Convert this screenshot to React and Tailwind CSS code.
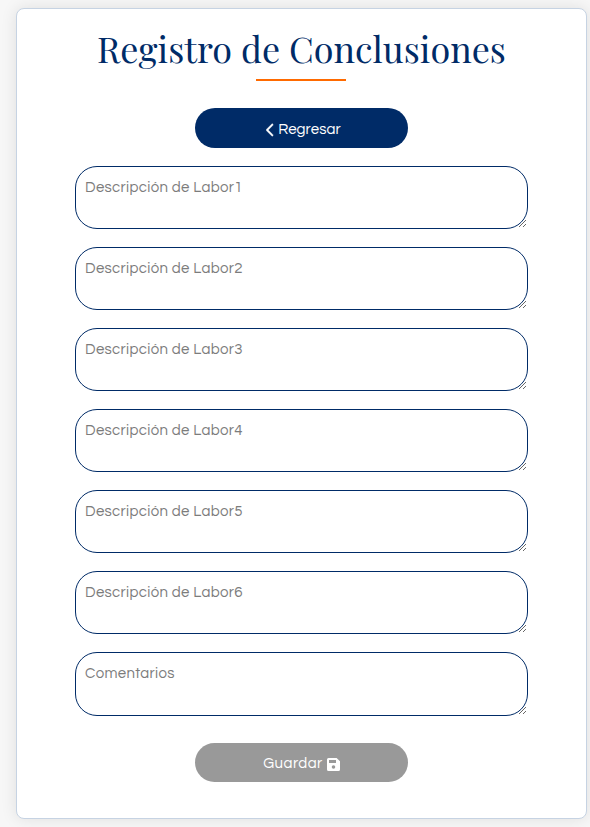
import { FaChevronLeft } from "react-icons/fa6";

const fields = [
  "Descripción de Labor1",
  "Descripción de Labor2",
  "Descripción de Labor3",
  "Descripción de Labor4",
  "Descripción de Labor5",
  "Descripción de Labor6",
];

const fieldClass =
  "block w-[453px] resize rounded-[22px] border border-[#002b67] bg-white px-[9px] pt-[11px] text-[15px] leading-5 tracking-[0.33px] text-gray-700 placeholder:text-[#7c7c7c] outline-none overflow-auto";

function SaveIcon() {
  return (
    <svg width="13" height="13" viewBox="0 0 13 13" fill="currentColor" fillRule="evenodd" className="mt-[3px]">
      <path d="M1.5 0H9.6L13 3.2V11.5Q13 13 11.5 13H1.5Q0 13 0 11.5V1.5Q0 0 1.5 0ZM2 2V5H9V2ZM6.5 7.2A1.8 1.8 0 1 0 6.5 10.8A1.8 1.8 0 1 0 6.5 7.2Z" />
    </svg>
  );
}

export default function App() {
  return (
    <div className="h-[827px] w-[590px] overflow-hidden bg-[#f7f7f7] pl-4 pt-2 font-['Century_Gothic','Questrial','Lato',sans-serif]">
      <main className="flex h-[811px] w-[571px] flex-col items-center rounded-lg border border-[#c6d3e3] bg-white shadow-[0_0_16px_rgba(0,0,0,0.1)]">
        <h1 className="mt-[15px] h-[55px] whitespace-nowrap font-['Playfair_Display','Liberation_Serif',serif] text-[36px] leading-[48px] text-[#002b67]">
          Registro de Conclusiones
        </h1>
        <div className="mr-px h-[2px] w-[90px] bg-[#ff6a00]" />
        <button className="mt-[27px] flex h-10 w-[213px] items-center justify-center gap-[3px] rounded-[20px] bg-[#002b67] pl-1 text-[15px] text-white">
          <FaChevronLeft className="mt-[3px] h-[14px] w-[9px]" stroke="white" strokeWidth="16" />
          <span className="pt-[3px] leading-5 tracking-[0.1px]">Regresar</span>
        </button>
        <div className="mt-[18px] flex flex-col gap-[18px]">
          {fields.map((label) => (
            <textarea key={label} placeholder={label} className={`${fieldClass} h-[63px]`} />
          ))}
          <textarea placeholder="Comentarios" className={`${fieldClass} h-[64px]`} />
        </div>
        <button className="mt-[27px] flex h-[39px] w-[213px] items-center justify-center gap-1 rounded-[19.5px] bg-[#999999] text-[15px] tracking-[0.45px] text-white">
          <span className="pt-[3px] leading-5">Guardar</span>
          <SaveIcon />
        </button>
      </main>
    </div>
  );
}
